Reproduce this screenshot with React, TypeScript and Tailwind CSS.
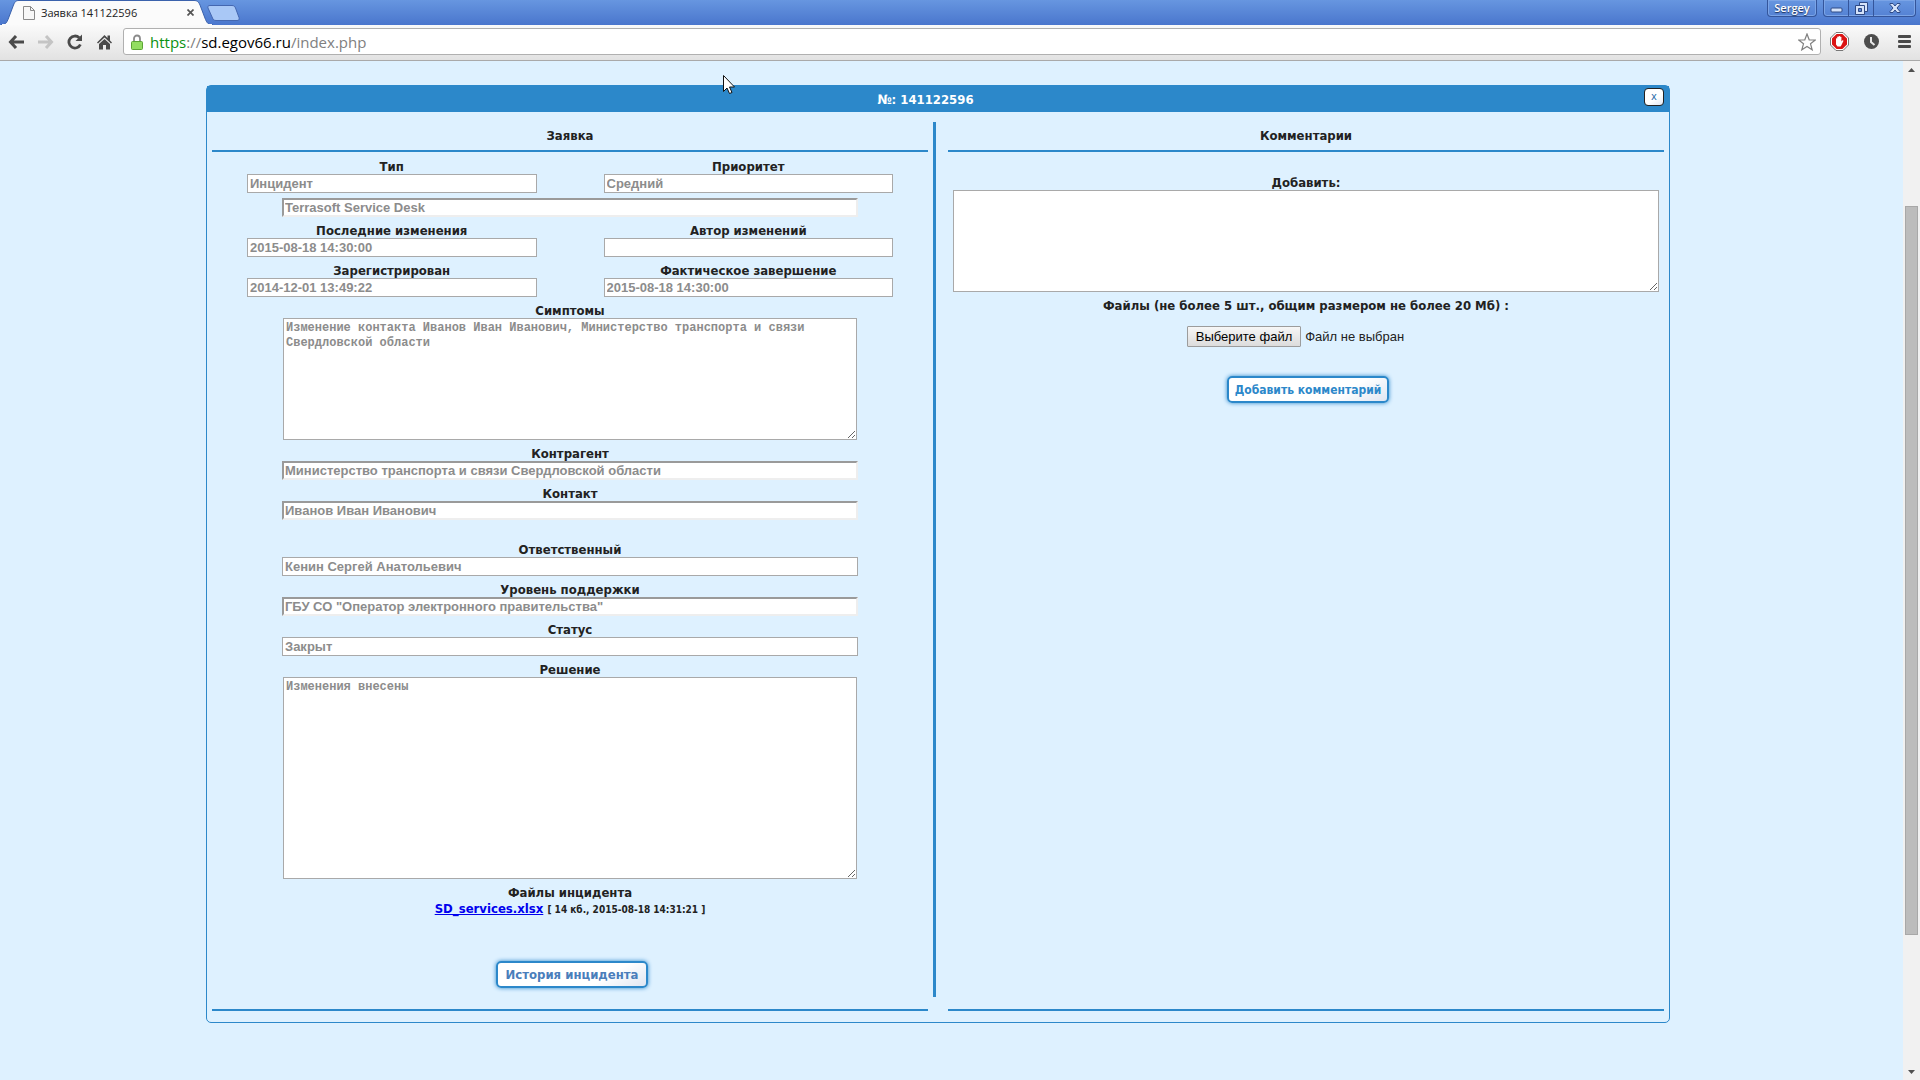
import { useRef, type ReactNode } from "react";

interface FieldProps {
  id: string;
  label?: string;
  value?: string;
  inset?: boolean;
}

const Field = ({ id, label, value = "", inset = false }: FieldProps) => (
  <div className="flex flex-col">
    {label && (
      <label htmlFor={id} className="h-4 text-center leading-[18px]">
        {label}
      </label>
    )}
    <input
      id={id}
      type="text"
      aria-label={label ? undefined : "Сервис"}
      defaultValue={value}
      disabled
      className={`w-full h-[19px] bg-white font-['Liberation_Sans',sans-serif] font-bold text-[13px] text-[#8c8c8c] ${
        inset
          ? "border-2 border-t-[#9a9a9a] border-l-[#9a9a9a] border-b-[#eeeeee] border-r-[#eeeeee] px-px"
          : "border border-[#a9a9a9] px-0.5"
      }`}
    />
  </div>
);

interface AreaProps {
  id: string;
  label: string;
  value: string;
  height: string;
}

const Area = ({ id, label, value, height }: AreaProps) => (
  <div className="flex flex-col px-px">
    <label htmlFor={id} className="h-4 text-center leading-[18px]">
      {label}
    </label>
    <textarea
      id={id}
      defaultValue={value}
      disabled
      className={`block w-full ${height} bg-white border border-[#a9a9a9] px-0.5 py-0.5 font-['Liberation_Mono',monospace] font-bold text-[12px] leading-[15px] text-[#8c8c8c]`}
    />
  </div>
);

const GlowButton = ({ children, className }: { children: ReactNode; className: string }) => (
  <button
    type="button"
    className={`h-[27px] rounded-[5px] border-2 border-[#2c88ca] bg-linear-150 from-white from-70% to-[#dfe6f2] shadow-[0_0_4px_#2c88ca] font-bold whitespace-nowrap ${className}`}
  >
    {children}
  </button>
);

const TitleBar = () => (
  <div className="flex h-[25px] items-start bg-linear-to-b from-[#6796e0] to-[#4a76cd]">
    <div className="relative ml-px h-[25px] w-[212px]">
      <svg className="absolute inset-0" width="212" height="25" viewBox="0 0 212 25">
        <path
          d="M0 25C4 25 5.500 23 7 19.500L12.500 5C14 1.500 15 .5 18 .5H193C196 .5 197.500 1.500 199 5L204.500 19.500C206 23 207.500 25 212 25Z"
          fill="#fbfbfb"
          stroke="#3b62ac"
          strokeWidth="1"
        />
        <path d="M1 25H211" stroke="#fbfbfb" strokeWidth="2" />
      </svg>
      <div className="relative flex h-[25px] items-center pl-[22px] pr-[14px]">
        <svg width="12" height="14" viewBox="0 0 12 14">
          <path d="M.5.5H7.500L11.500 4.500V13.500H.5Z" fill="#f7f7f7" stroke="#8a8a8a" />
          <path d="M7.500.5V4.500H11.500" fill="none" stroke="#8a8a8a" />
        </svg>
        <span className="ml-[6px] flex-1 font-['Open_Sans',sans-serif] text-[11px] leading-4 text-[#222]">
          Заявка 141122596
        </span>
        <button type="button" aria-label="Закрыть вкладку" className="mr-[4px] p-px">
          <svg width="7" height="7" viewBox="0 0 7 7" stroke="#555" strokeWidth="1.700">
            <path d="M.5.5L6.500 6.500M6.500.5L.5 6.500" />
          </svg>
        </button>
      </div>
    </div>
    <button type="button" aria-label="Новая вкладка" className="-ml-[6px] mt-[5px]">
      <svg width="33" height="16" viewBox="0 0 33 16">
        <path
          d="M3 .5H25C27 .5 28 1.500 28.500 3L32 12.500C32.500 14.500 32 15.500 30 15.500H9C7 15.500 6 14.500 5.500 13L1 3C.5 1.500 1 .5 3 .5Z"
          fill="#a9c8f6"
          stroke="#4467b0"
        />
      </svg>
    </button>
    <div className="ml-auto mr-1 flex items-start gap-1.5">
      <button
        type="button"
        className="h-[17px] w-[50px] rounded-b-[4px] border border-t-0 border-[#34559b] font-['Open_Sans',sans-serif] text-[11px] font-semibold leading-4 text-white shadow-[inset_0_0_0_1px_#7ba4e6] text-shadow-[0_1px_1px_#1d2f57]"
      >
        Sergey
      </button>
      <div className="flex h-[17px] rounded-b-[4px] border border-t-0 border-[#34559b] shadow-[inset_0_0_0_1px_#7ba4e6]">
        <button
          type="button"
          aria-label="Свернуть"
          className="flex w-[25px] items-center justify-center border-r border-[#34559b]"
        >
          <svg width="13" height="16" viewBox="0 0 13 16">
            <rect x="1" y="8" width="11" height="4" rx="1" fill="#d5e3fa" stroke="#2f4a86" />
          </svg>
        </button>
        <button
          type="button"
          aria-label="Развернуть"
          className="flex w-[25px] items-center justify-center border-r border-[#34559b]"
        >
          <svg width="13" height="16" viewBox="0 0 13 16" stroke="#2f4a86">
            <path d="M4.500 2.500H12.500V11.500H4.500Z" fill="#d5e3fa" />
            <path d="M.5 5.500H9.500V14.500H.5Z" fill="#d5e3fa" />
            <path d="M3.500 8.500H6.500V11.500H3.500Z" fill="#5c88d8" />
          </svg>
        </button>
        <button type="button" aria-label="Закрыть" className="flex w-[41px] items-center justify-center">
          <svg width="12" height="16" viewBox="0 0 12 16">
            <path
              d="M1 3.500H4L6 6L8 3.500H11V4.500L8 8L11 11.500V12.500H8L6 10L4 12.500H1V11.500L4 8L1 4.500Z"
              fill="#d5e3fa"
              stroke="#2f4a86"
            />
          </svg>
        </button>
      </div>
    </div>
  </div>
);

const Toolbar = () => (
  <div className="flex h-9 items-center border-b border-[#a9a9a9] bg-linear-to-b from-[#fafafa] to-[#e2e2e2] pb-0.5 pl-2 pr-[9px]">
    <button type="button" aria-label="Назад">
      <svg width="17" height="14" viewBox="0 0 17 14" fill="none" stroke="#4a4a4a" strokeWidth="3">
        <path d="M8 1L2.500 7L8 13M3 7H16" />
      </svg>
    </button>
    <button type="button" aria-label="Вперёд" className="ml-3">
      <svg width="17" height="14" viewBox="0 0 17 14" fill="none" stroke="#c4c4c4" strokeWidth="3">
        <path d="M9 1L14.500 7L9 13M14 7H1" />
      </svg>
    </button>
    <button type="button" aria-label="Обновить" className="ml-[13px]">
      <svg width="16" height="16" viewBox="0 0 16 16">
        <path d="M13.400 10.500A6 6 0 1 1 12.200 3.800" fill="none" stroke="#4a4a4a" strokeWidth="2.800" />
        <path d="M15 .5V7H8.500Z" fill="#4a4a4a" />
      </svg>
    </button>
    <button type="button" aria-label="Домой" className="ml-3.5">
      <svg width="15" height="16" viewBox="0 0 15 16" fill="#4a4a4a">
        <path d="M7.500 1L0 8.500L1 9.500L7.500 3.500L14 9.500L15 8.500L13 6.500V1.500H10.500V4Z" />
        <path d="M7.500 5L2 10V15.500H6V11H9V15.500H13V10Z" />
      </svg>
    </button>
    <div className="ml-[11px] flex h-[27px] flex-1 items-center rounded-[3px] border border-[#b0b0b0] bg-white pl-[7px] pr-1">
      <svg width="12" height="16" viewBox="0 0 12 16">
        <path d="M3 8V4.500A3 3 0 0 1 9 4.500V8" fill="none" stroke="#8b8b8b" strokeWidth="1.800" />
        <rect x=".5" y="7.500" width="11" height="8" rx="1" fill="#93dd62" stroke="#5ca436" />
      </svg>
      <div className="ml-[7px] flex-1 font-['Open_Sans',sans-serif] text-[15px] leading-6 text-[#808080]">
        <span className="text-[#0a9112]">https</span>://<span className="text-black">sd.egov66.ru</span>/index.php
      </div>
      <button type="button" aria-label="Добавить в закладки">
        <svg width="18" height="18" viewBox="0 0 18 18">
          <path
            d="M9 1L11.200 6.800L17.300 7L12.500 10.800L14.200 16.800L9 13.400L3.800 16.800L5.500 10.800L.7 7L6.800 6.800Z"
            fill="#fff"
            stroke="#808080"
            strokeWidth="1.200"
          />
        </svg>
      </button>
    </div>
    <button type="button" aria-label="AdBlock" className="ml-[9px]">
      <svg width="19" height="19" viewBox="0 0 19 19">
        <path d="M6 .5H13L18.500 6V13L13 18.500H6L.5 13V6Z" fill="#fff" stroke="#777" />
        <path d="M6.600 2H12.400L17 6.600V12.400L12.400 17H6.600L2 12.400V6.600Z" fill="#db1414" />
        <path
          d="M6 9.500V6.500Q6.600 5.800 7.200 6.500V5Q7.900 4.200 8.600 5V4.300Q9.300 3.500 10 4.300V5Q10.700 4.200 11.400 5V9.500L12.500 8.200Q13.600 8 13.400 9L11.500 13L10.500 14.500H7.500L6 12.500Z"
          fill="#fff"
        />
      </svg>
    </button>
    <button type="button" aria-label="История" className="ml-[15px]">
      <svg width="15" height="15" viewBox="0 0 15 15">
        <circle cx="7.500" cy="7.500" r="7.500" fill="#4d4d4d" />
        <path d="M7 3V8L10.500 11" fill="none" stroke="#e8e8e8" strokeWidth="2" />
      </svg>
    </button>
    <button type="button" aria-label="Меню" className="ml-[19px]">
      <svg width="13" height="14" viewBox="0 0 13 14" fill="#4a4a4a">
        <rect width="13" height="3" rx="1" />
        <rect y="5" width="13" height="3" rx="1" />
        <rect y="10" width="13" height="3" rx="1" />
      </svg>
    </button>
  </div>
);

const ScrollBar = () => (
  <div className="flex w-[17px] flex-col items-stretch bg-[#f1f1f1] px-0.5">
    <div className="flex h-[17px] items-center justify-center">
      <svg width="7" height="4" viewBox="0 0 7 4" fill="#505050">
        <path d="M0 4L3.500 0L7 4Z" />
      </svg>
    </div>
    <div className="grow-[13]" />
    <div className="grow-[74] border border-[#a8a8a8] bg-[#bcbcbc]" />
    <div className="grow-[13]" />
    <div className="flex h-[17px] items-center justify-center">
      <svg width="7" height="4" viewBox="0 0 7 4" fill="#505050">
        <path d="M0 0L3.500 4L7 0Z" />
      </svg>
    </div>
  </div>
);

const Incident = () => (
  <section className="flex flex-1 flex-col">
    <h2 className="mt-4 border-b-2 border-[#2c88ca] pb-1.5 text-center leading-4">Заявка</h2>
    <div className="mt-1.5 flex flex-col gap-[5px]">
      <div className="grid grid-cols-2 gap-x-[67px] px-[35px]">
        <Field id="type" label="Тип" value="Инцидент" />
        <Field id="priority" label="Приоритет" value="Средний" />
      </div>
      <div className="px-[70px]">
        <Field id="service" value="Terrasoft Service Desk" inset />
      </div>
      <div className="grid grid-cols-2 gap-x-[67px] gap-y-[5px] px-[35px]">
        <Field id="modified" label="Последние изменения" value="2015-08-18 14:30:00" />
        <Field id="modifiedBy" label="Автор изменений" />
        <Field id="registered" label="Зарегистрирован" value="2014-12-01 13:49:22" />
        <Field id="finished" label="Фактическое завершение" value="2015-08-18 14:30:00" />
      </div>
      <div className="flex flex-col gap-[5px] px-[70px]">
        <Area
          id="symptoms"
          label="Симптомы"
          height="h-[122px]"
          value="Изменение контакта Иванов Иван Иванович, Министерство транспорта и связи Свердловской области"
        />
        <Field
          id="account"
          label="Контрагент"
          value="Министерство транспорта и связи Свердловской области"
          inset
        />
        <Field id="contact" label="Контакт" value="Иванов Иван Иванович" inset />
        <div className="mt-4">
          <Field id="owner" label="Ответственный" value="Кенин Сергей Анатольевич" />
        </div>
        <Field
          id="level"
          label="Уровень поддержки"
          value={'ГБУ СО "Оператор электронного правительства"'}
          inset
        />
        <Field id="status" label="Статус" value="Закрыт" />
        <Area id="solution" label="Решение" height="h-[202px]" value="Изменения внесены" />
      </div>
      <div className="text-center">
        <div className="h-4 leading-[18px]">Файлы инцидента</div>
        <div className="h-4 leading-[18px]">
          <a href="#" className="text-[#0000ee] underline">
            SD_services.xlsx
          </a>{" "}
          <span className="text-[10px]">[ 14 кб., 2015-08-18 14:31:21 ]</span>
        </div>
      </div>
    </div>
    <div className="mt-[45px] mb-[21px] flex justify-center pl-1">
      <GlowButton className="px-2 text-[13px] text-[#4a7ebb]">История инцидента</GlowButton>
    </div>
    <div className="mt-auto h-0.5 bg-[#2c88ca]" />
  </section>
);

const Comments = () => {
  const fileRef = useRef<HTMLInputElement>(null);

  return (
    <section className="flex flex-1 flex-col">
      <h2 className="mt-4 border-b-2 border-[#2c88ca] pb-1.5 text-center leading-4">Комментарии</h2>
      <div className="mt-[22px] flex flex-col px-[5px]">
        <label htmlFor="comment" className="h-4 text-center leading-[18px]">
          Добавить:
        </label>
        <textarea id="comment" className="block h-[102px] w-full border border-[#a9a9a9] bg-white" />
        <label htmlFor="files" className="mt-1.5 text-center leading-4">
          Файлы (не более 5 шт., общим размером не более 20 Мб) :
        </label>
      </div>
      <div className="mt-3 flex items-center justify-center gap-1 font-['Liberation_Sans',sans-serif] text-[13px] font-normal">
        <input ref={fileRef} id="files" type="file" className="hidden" />
        <button
          type="button"
          onClick={() => fileRef.current?.click()}
          className="h-[21px] rounded-[1px] border border-[#9c9c9c] bg-linear-to-b from-[#f6f6f6] to-[#dcdcdc] px-2 leading-4 text-black"
        >
          Выберите файл
        </button>
        <span className="w-[120px] leading-4">Файл не выбран</span>
      </div>
      <div className="mt-[29px] flex justify-center pl-1">
        <GlowButton className="px-1.5 text-[12px] text-[#2c88ca]">Добавить комментарий</GlowButton>
      </div>
      <div className="mt-auto h-0.5 bg-[#2c88ca]" />
    </section>
  );
};

const App = () => {
  return (
    <div className="flex min-h-screen flex-col bg-[#def1ff]">
      <header>
        <TitleBar />
        <Toolbar />
      </header>
      <div className="flex flex-1">
        <main className="relative flex-1 pt-6 pb-[57px] pl-[206px] pr-[233px] font-['DejaVu_Sans_Condensed','DejaVu_Sans',sans-serif] text-[13px] font-bold text-[#222]">
          <div className="rounded-[5px] border border-[#2c88ca]">
            <div className="flex h-[26px] items-center bg-[#2c88ca] pr-[5px] text-white">
              <h1 className="flex-1 pt-0.5 text-center leading-4">№: 141122596</h1>
              <button
                type="button"
                className="mb-1 flex h-[18px] w-5 items-center justify-center rounded-[4px] border border-[#222] bg-linear-150 from-white from-60% to-[#dfe6f2] text-[11px] font-normal leading-4 text-[#2c6ca8]"
              >
                x
              </button>
            </div>
            <div className="flex px-[5px] pb-[11px]">
              <Incident />
              <div className="mt-2.5 mr-3 mb-3.5 ml-[5px] w-[3px] bg-[#2c88ca]" />
              <Comments />
            </div>
          </div>
          {/* mouse pointer */}
          <svg className="absolute top-[14px] left-[723px]" width="13" height="20" viewBox="0 0 13 20">
            <path
              d="M.5.5V16.500L4 13L6.500 18.500L9 17.500L6.500 12H11.500Z"
              fill="#fff"
              stroke="#111"
            />
          </svg>
        </main>
        <ScrollBar />
      </div>
    </div>
  );
};

export default App;
